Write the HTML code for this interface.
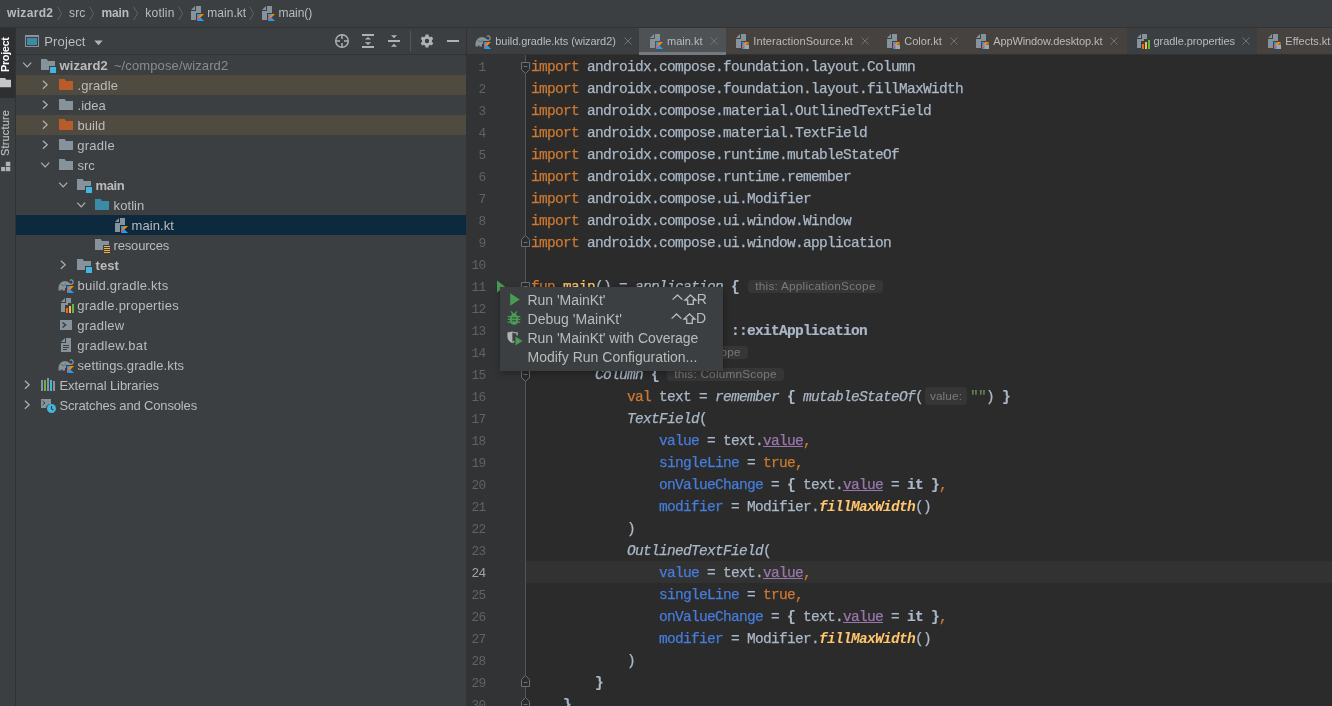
<!DOCTYPE html>
<html><head><meta charset="utf-8"><title>main.kt</title>
<style>
*{box-sizing:border-box;margin:0;padding:0}
html,body{width:1332px;height:706px;overflow:hidden;background:#3c3f41}
body{font-family:"Liberation Sans",sans-serif;font-size:13px;color:#bbbbbb;position:relative}
.a{position:absolute}
.ln{position:absolute;left:0;width:18.8px;text-align:right;font-family:"Liberation Mono",monospace;font-size:12.8px;letter-spacing:-0.48px;line-height:22px;height:22px;color:#606366}
.cl{position:absolute;left:64px;height:22px;-webkit-text-stroke:0.25px;white-space:pre;font-family:"Liberation Mono",monospace;font-size:14.5px;letter-spacing:-0.7015px;line-height:22px;color:#a9b7c6}
.k{color:#cc7832}.n{color:#467cda}.p{color:#9876aa;text-decoration:underline}.f{color:#ffc66d;font-style:italic;font-weight:bold;-webkit-text-stroke:0}.i{font-style:italic}.b{font-weight:bold}.cl b{-webkit-text-stroke:0.2px}.fn{color:#ffc66d}
.h{display:inline-block;vertical-align:top;margin-top:4px;height:13px;line-height:13px;border-radius:4px;background:#363636;color:#7a7a7a;-webkit-text-stroke:0;letter-spacing:0.16px;font-family:"Liberation Sans",sans-serif;font-size:12px;font-style:normal;font-weight:normal;text-align:center;overflow:hidden}
</style></head><body><div id="root" style="position:absolute;left:0;top:0;width:1332px;height:706px;will-change:transform">

<div class="a" style="left:0;top:0;width:1332px;height:28px;background:#3c3f41;border-bottom:1px solid #323232">
<span style="position:absolute;left:7.00px;top:5.00px;font-size:12px;line-height:16px;white-space:pre;color:#bbbbbb;font-weight:bold;letter-spacing:0.326px;">wizard2</span>
<svg class="a" style="left:56.5px;top:5px" width="8" height="17" viewBox="0 0 8 17"><path d="M0.6,1.8 L4.7,8.5 L0.6,15.2" stroke="#606365" stroke-width="1" fill="none"/></svg>
<span style="position:absolute;left:69.00px;top:5.00px;font-size:12px;line-height:16px;white-space:pre;color:#bbbbbb;letter-spacing:0.167px;">src</span>
<svg class="a" style="left:88.5px;top:5px" width="8" height="17" viewBox="0 0 8 17"><path d="M0.6,1.8 L4.7,8.5 L0.6,15.2" stroke="#606365" stroke-width="1" fill="none"/></svg>
<span style="position:absolute;left:101.40px;top:5.00px;font-size:12px;line-height:16px;white-space:pre;color:#bbbbbb;font-weight:bold;letter-spacing:-0.104px;">main</span>
<svg class="a" style="left:132.5px;top:5px" width="8" height="17" viewBox="0 0 8 17"><path d="M0.6,1.8 L4.7,8.5 L0.6,15.2" stroke="#606365" stroke-width="1" fill="none"/></svg>
<span style="position:absolute;left:145.30px;top:5.00px;font-size:12px;line-height:16px;white-space:pre;color:#bbbbbb;letter-spacing:0.214px;">kotlin</span>
<svg class="a" style="left:178px;top:5px" width="8" height="17" viewBox="0 0 8 17"><path d="M0.6,1.8 L4.7,8.5 L0.6,15.2" stroke="#606365" stroke-width="1" fill="none"/></svg>
<svg style="position:absolute;left:188px;top:5px" width="16" height="16" viewBox="0 0 16 16"><path d="M3,5 L7,1 L7,5 Z" fill="#87939a"/><path d="M8,1 L13,1 L13,8 L8,8 L8,15 L3,15 L3,6 L8,6 Z" fill="#87939a"/><defs><linearGradient id="kg1" x1="0" y1="1" x2="1" y2="0"><stop offset="0" stop-color="#c757bc"/><stop offset="0.25" stop-color="#d0609a"/><stop offset="0.55" stop-color="#f88909"/><stop offset="1" stop-color="#f88909"/></linearGradient></defs><path d="M9,9 L12.5,9 L9,12.5 Z" fill="#1aa3f4"/><path d="M12.5,9 L16,9 L9,16 L9,12.5 Z" fill="url(#kg1)"/><path d="M9,16 L12.5,12.5 L16,16 Z" fill="#1aa3f4"/></svg>
<span style="position:absolute;left:207.30px;top:5.00px;font-size:12px;line-height:16px;white-space:pre;color:#bbbbbb;letter-spacing:0.030px;">main.kt</span>
<svg class="a" style="left:249px;top:5px" width="8" height="17" viewBox="0 0 8 17"><path d="M0.6,1.8 L4.7,8.5 L0.6,15.2" stroke="#606365" stroke-width="1" fill="none"/></svg>
<svg style="position:absolute;left:259px;top:5px" width="16" height="16" viewBox="0 0 16 16"><path d="M3,5 L7,1 L7,5 Z" fill="#87939a"/><path d="M8,1 L13,1 L13,8 L8,8 L8,15 L3,15 L3,6 L8,6 Z" fill="#87939a"/><defs><linearGradient id="kg2" x1="0" y1="1" x2="1" y2="0"><stop offset="0" stop-color="#c757bc"/><stop offset="0.25" stop-color="#d0609a"/><stop offset="0.55" stop-color="#f88909"/><stop offset="1" stop-color="#f88909"/></linearGradient></defs><path d="M9,9 L12.5,9 L9,12.5 Z" fill="#1aa3f4"/><path d="M12.5,9 L16,9 L9,16 L9,12.5 Z" fill="url(#kg2)"/><path d="M9,16 L12.5,12.5 L16,16 Z" fill="#1aa3f4"/></svg>
<span style="position:absolute;left:278.50px;top:5.00px;font-size:12px;line-height:16px;white-space:pre;color:#bbbbbb;letter-spacing:-0.053px;">main()</span>
</div>
<div class="a" style="left:0;top:28px;width:16px;height:678px;background:#3c3f41;border-right:1px solid #323232">
<div class="a" style="left:0;top:0;width:15px;height:70px;background:#2d2f30"></div>
<div class="a" style="left:-2px;top:44px;width:0;height:0"><span style="position:absolute;white-space:pre;transform-origin:0 0;transform:rotate(-90deg);font-size:11px;font-weight:bold;color:#ffffff;line-height:15px;left:0;top:0;letter-spacing:-0.4px">Project</span></div>
<svg class="a" style="left:0;top:49px" width="15" height="12" viewBox="0 0 15 12"><path d="M-3,10.2 L11,10.2 L11,2.7 L6.3,2.7 L5,1 L-3,1 Z" fill="#c4c6c8"/></svg>
<div class="a" style="left:-2px;top:127.5px;width:0;height:0"><span style="position:absolute;white-space:pre;transform-origin:0 0;transform:rotate(-90deg);font-size:11px;letter-spacing:0.17px;-webkit-text-stroke:0.2px;color:#bbbbbb;line-height:15px;left:0;top:0">Structure</span></div>
<svg class="a" style="left:0;top:133px" width="15" height="12" viewBox="0 0 15 12"><rect x="5.8" y="0.8" width="4.5" height="4.4" fill="#afb1b3"/><rect x="1.1" y="6" width="4" height="4.2" fill="#afb1b3"/><rect x="5.8" y="6" width="4.5" height="4.2" fill="#afb1b3"/></svg>
</div>
<div class="a" style="left:16px;top:28px;width:450px;height:678px;background:#3c3f41;overflow:hidden">
<div class="a" style="left:0;top:0;width:450px;height:27px;border-bottom:1px solid #323232"></div>
<svg style="position:absolute;left:8px;top:5px" width="16" height="16" viewBox="0 0 16 16"><rect x="1.5" y="2.5" width="13" height="11" fill="none" stroke="#87939a" stroke-width="1"/><rect x="1" y="2" width="14" height="2" fill="#87939a"/><rect x="3" y="5" width="10" height="7" fill="#3b8aa6"/></svg>
<span style="position:absolute;left:28.30px;top:6.00px;font-size:13px;line-height:16px;white-space:pre;color:#bbbbbb;letter-spacing:0.119px;">Project</span>
<svg class="a" style="left:77.5px;top:11.5px" width="9" height="6" viewBox="0 0 9 6"><path d="M0.3,0.5 L8.7,0.5 L4.5,5.3 Z" fill="#afb1b3"/></svg>
<svg style="position:absolute;left:318px;top:5px" width="16" height="16" viewBox="0 0 16 16"><circle cx="8" cy="8" r="6.3" fill="none" stroke="#afb1b3" stroke-width="1.4"/><path d="M8,1.5V6 M8,10V14.5 M1.5,8H6 M10,8H14.5" stroke="#afb1b3" stroke-width="1.5"/></svg>
<svg style="position:absolute;left:344px;top:5px" width="16" height="16" viewBox="0 0 16 16"><rect x="2" y="1" width="12" height="2" fill="#afb1b3"/><rect x="2" y="13" width="12" height="2" fill="#afb1b3"/><path d="M8,3.9 L11.2,6.5 L4.8,6.5 Z M8,12 L11.2,9.3 L4.8,9.3 Z" fill="#afb1b3"/></svg>
<svg style="position:absolute;left:370px;top:5px" width="16" height="16" viewBox="0 0 16 16"><rect x="2" y="7" width="12" height="2" fill="#afb1b3"/><path d="M8,5.2 L11,2.2 L5,2.2 Z M8,10.8 L11,13.8 L5,13.8 Z" fill="#afb1b3"/></svg>
<div class="a" style="left:394px;top:3px;width:1px;height:20px;background:#555759"></div>
<svg style="position:absolute;left:403px;top:5px" width="16" height="16" viewBox="0 0 16 16"><path fill-rule="evenodd" d="M6.33,3.29 L6.56,1.56 L9.44,1.56 L9.67,3.29 L11.25,4.20 L12.86,3.53 L14.30,6.03 L12.92,7.09 L12.92,8.91 L14.30,9.97 L12.86,12.47 L11.25,11.80 L9.67,12.71 L9.44,14.44 L6.56,14.44 L6.33,12.71 L4.75,11.80 L3.14,12.47 L1.70,9.97 L3.08,8.91 L3.08,7.09 L1.70,6.03 L3.14,3.53 L4.75,4.20 Z M8,5.8 A2.2,2.2 0 1 0 8,10.2 A2.2,2.2 0 1 0 8,5.8 Z" fill="#afb1b3"/></svg>
<div class="a" style="left:431px;top:12px;width:12px;height:2px;background:#afb1b3"></div>
<div class="a" style="left:0;top:27px;width:450px;height:20px;background:transparent">
<svg style="position:absolute;left:6px;top:2px" width="16" height="16" viewBox="0 0 16 16"><path d="M1.2,5.6 L5.2,9.9 L9.2,5.6" stroke="#afb1b3" stroke-width="1.2" fill="none"/></svg>
<svg style="position:absolute;left:24px;top:2px" width="16" height="16" viewBox="0 0 16 16"><path d="M1,2 L6.7,2 L7.98,4 L15,4 L15,9 L9,9 L9,13 L1,13 Z" fill="#87939a"/><rect x="10" y="10" width="6" height="6" fill="#40b6e0"/></svg>
<span style="position:absolute;left:43.50px;top:3.00px;font-size:13px;line-height:16px;white-space:pre;color:#bbbbbb;font-weight:bold;letter-spacing:0.102px;">wizard2</span>
<span style="position:absolute;left:97.90px;top:3.00px;font-size:13px;line-height:16px;white-space:pre;color:#8a8c8e;letter-spacing:0.119px;">~/compose/wizard2</span>
</div>
<div class="a" style="left:0;top:47px;width:450px;height:20px;background:#4f4b41">
<svg style="position:absolute;left:24px;top:2px" width="16" height="16" viewBox="0 0 16 16"><path d="M2.9,3.8 L7.2,7.8 L2.9,11.8" stroke="#afb1b3" stroke-width="1.2" fill="none"/></svg>
<svg style="position:absolute;left:42px;top:2px" width="16" height="16" viewBox="0 0 16 16"><path d="M1,13 L15,13 L15,4 L7.98,4 L6.7,2 L1,2 Z" fill="#b85c2a"/></svg>
<span style="position:absolute;left:61.50px;top:3.00px;font-size:13px;line-height:16px;white-space:pre;color:#bbbbbb;letter-spacing:0.107px;">.gradle</span>
</div>
<div class="a" style="left:0;top:67px;width:450px;height:20px;background:transparent">
<svg style="position:absolute;left:24px;top:2px" width="16" height="16" viewBox="0 0 16 16"><path d="M2.9,3.8 L7.2,7.8 L2.9,11.8" stroke="#afb1b3" stroke-width="1.2" fill="none"/></svg>
<svg style="position:absolute;left:42px;top:2px" width="16" height="16" viewBox="0 0 16 16"><path d="M1,13 L15,13 L15,4 L7.98,4 L6.7,2 L1,2 Z" fill="#87939a"/></svg>
<span style="position:absolute;left:61.50px;top:3.00px;font-size:13px;line-height:16px;white-space:pre;color:#bbbbbb;letter-spacing:0.019px;">.idea</span>
</div>
<div class="a" style="left:0;top:87px;width:450px;height:20px;background:#4f4b41">
<svg style="position:absolute;left:24px;top:2px" width="16" height="16" viewBox="0 0 16 16"><path d="M2.9,3.8 L7.2,7.8 L2.9,11.8" stroke="#afb1b3" stroke-width="1.2" fill="none"/></svg>
<svg style="position:absolute;left:42px;top:2px" width="16" height="16" viewBox="0 0 16 16"><path d="M1,13 L15,13 L15,4 L7.98,4 L6.7,2 L1,2 Z" fill="#b85c2a"/></svg>
<span style="position:absolute;left:61.50px;top:3.00px;font-size:13px;line-height:16px;white-space:pre;color:#bbbbbb;letter-spacing:0.066px;">build</span>
</div>
<div class="a" style="left:0;top:107px;width:450px;height:20px;background:transparent">
<svg style="position:absolute;left:24px;top:2px" width="16" height="16" viewBox="0 0 16 16"><path d="M2.9,3.8 L7.2,7.8 L2.9,11.8" stroke="#afb1b3" stroke-width="1.2" fill="none"/></svg>
<svg style="position:absolute;left:42px;top:2px" width="16" height="16" viewBox="0 0 16 16"><path d="M1,13 L15,13 L15,4 L7.98,4 L6.7,2 L1,2 Z" fill="#87939a"/></svg>
<span style="position:absolute;left:61.20px;top:3.00px;font-size:13px;line-height:16px;white-space:pre;color:#bbbbbb;letter-spacing:0.277px;">gradle</span>
</div>
<div class="a" style="left:0;top:127px;width:450px;height:20px;background:transparent">
<svg style="position:absolute;left:24px;top:2px" width="16" height="16" viewBox="0 0 16 16"><path d="M1.2,5.6 L5.2,9.9 L9.2,5.6" stroke="#afb1b3" stroke-width="1.2" fill="none"/></svg>
<svg style="position:absolute;left:42px;top:2px" width="16" height="16" viewBox="0 0 16 16"><path d="M1,13 L15,13 L15,4 L7.98,4 L6.7,2 L1,2 Z" fill="#87939a"/></svg>
<span style="position:absolute;left:61.50px;top:3.00px;font-size:13px;line-height:16px;white-space:pre;color:#bbbbbb;letter-spacing:-0.015px;">src</span>
</div>
<div class="a" style="left:0;top:147px;width:450px;height:20px;background:transparent">
<svg style="position:absolute;left:42px;top:2px" width="16" height="16" viewBox="0 0 16 16"><path d="M1.2,5.6 L5.2,9.9 L9.2,5.6" stroke="#afb1b3" stroke-width="1.2" fill="none"/></svg>
<svg style="position:absolute;left:60px;top:2px" width="16" height="16" viewBox="0 0 16 16"><path d="M1,2 L6.7,2 L7.98,4 L15,4 L15,9 L9,9 L9,13 L1,13 Z" fill="#87939a"/><rect x="10" y="10" width="6" height="6" fill="#40b6e0"/></svg>
<span style="position:absolute;left:79.60px;top:3.00px;font-size:13px;line-height:16px;white-space:pre;color:#bbbbbb;font-weight:bold;letter-spacing:-0.386px;">main</span>
</div>
<div class="a" style="left:0;top:167px;width:450px;height:20px;background:transparent">
<svg style="position:absolute;left:60px;top:2px" width="16" height="16" viewBox="0 0 16 16"><path d="M1.2,5.6 L5.2,9.9 L9.2,5.6" stroke="#afb1b3" stroke-width="1.2" fill="none"/></svg>
<svg style="position:absolute;left:78px;top:2px" width="16" height="16" viewBox="0 0 16 16"><path d="M1,13 L15,13 L15,4 L7.98,4 L6.7,2 L1,2 Z" fill="#3b8aa6"/></svg>
<span style="position:absolute;left:97.60px;top:3.00px;font-size:13px;line-height:16px;white-space:pre;color:#bbbbbb;letter-spacing:0.073px;">kotlin</span>
</div>
<div class="a" style="left:0;top:187px;width:450px;height:20px;background:#0d293e">
<svg style="position:absolute;left:96px;top:2px" width="16" height="16" viewBox="0 0 16 16"><path d="M3,5 L7,1 L7,5 Z" fill="#87939a"/><path d="M8,1 L13,1 L13,8 L8,8 L8,15 L3,15 L3,6 L8,6 Z" fill="#87939a"/><defs><linearGradient id="kg3" x1="0" y1="1" x2="1" y2="0"><stop offset="0" stop-color="#c757bc"/><stop offset="0.25" stop-color="#d0609a"/><stop offset="0.55" stop-color="#f88909"/><stop offset="1" stop-color="#f88909"/></linearGradient></defs><path d="M9,9 L12.5,9 L9,12.5 Z" fill="#1aa3f4"/><path d="M12.5,9 L16,9 L9,16 L9,12.5 Z" fill="url(#kg3)"/><path d="M9,16 L12.5,12.5 L16,16 Z" fill="#1aa3f4"/></svg>
<span style="position:absolute;left:115.60px;top:3.00px;font-size:13px;line-height:16px;white-space:pre;color:#bbbbbb;letter-spacing:0.071px;">main.kt</span>
</div>
<div class="a" style="left:0;top:207px;width:450px;height:20px;background:transparent">
<svg style="position:absolute;left:78px;top:2px" width="16" height="16" viewBox="0 0 16 16"><path d="M1,2 L6.7,2 L7.98,4 L15,4 L15,8 L9,8 L9,13 L1,13 Z" fill="#87939a"/><path d="M10,9.5h6M10,11.5h6M10,13.5h6M10,15.5h6" stroke="#f4af3d" stroke-width="1"/></svg>
<span style="position:absolute;left:97.60px;top:3.00px;font-size:13px;line-height:16px;white-space:pre;color:#bbbbbb;letter-spacing:-0.186px;">resources</span>
</div>
<div class="a" style="left:0;top:227px;width:450px;height:20px;background:transparent">
<svg style="position:absolute;left:42px;top:2px" width="16" height="16" viewBox="0 0 16 16"><path d="M2.9,3.8 L7.2,7.8 L2.9,11.8" stroke="#afb1b3" stroke-width="1.2" fill="none"/></svg>
<svg style="position:absolute;left:60px;top:2px" width="16" height="16" viewBox="0 0 16 16"><path d="M1,2 L6.7,2 L7.98,4 L15,4 L15,9 L9,9 L9,13 L1,13 Z" fill="#87939a"/><rect x="10" y="10" width="6" height="6" fill="#40b6e0"/></svg>
<span style="position:absolute;left:79.60px;top:3.00px;font-size:13px;line-height:16px;white-space:pre;color:#bbbbbb;font-weight:bold;letter-spacing:0.044px;">test</span>
</div>
<div class="a" style="left:0;top:247px;width:450px;height:20px;background:transparent">
<svg style="position:absolute;left:42px;top:2px" width="16" height="16" viewBox="0 0 16 16"><path d="M0.6,13.4 C0.1,10.4 0.9,7.4 3,5.6 C4.6,4.3 7.2,4 9.2,4.6 C10.6,5 11.6,5.9 12.4,6.6 C13.2,7 14.1,6.7 14.4,5.8 C14.7,4.8 14.1,3.7 13.2,3.6 C12.7,3.5 12.4,3.7 12.1,4 L11.4,3.2 C12.2,2.3 13.5,2.1 14.5,2.7 C15.8,3.5 16.1,5.4 15.3,6.7 C14.6,7.9 13.3,8.3 12,8 L8,8 L8,11 L7,11 L7,13.4 L4.5,13.4 C4.5,12.7 4.3,12.3 3.8,12.3 C3.3,12.3 3.1,12.7 3.1,13.4 Z" fill="#87939a"/><path d="M2.6,6.6 C3.2,7.9 4.6,8.8 6,8.5 C6.9,8.3 7.5,7.6 7.7,6.8" stroke="#3c3f41" stroke-width="0.6" fill="none" opacity="0.75"/><defs><linearGradient id="kg4" x1="0" y1="1" x2="1" y2="0"><stop offset="0" stop-color="#c757bc"/><stop offset="0.25" stop-color="#d0609a"/><stop offset="0.55" stop-color="#f88909"/><stop offset="1" stop-color="#f88909"/></linearGradient></defs><path d="M9,9 L12.5,9 L9,12.5 Z" fill="#1aa3f4"/><path d="M12.5,9 L16,9 L9,16 L9,12.5 Z" fill="url(#kg4)"/><path d="M9,16 L12.5,12.5 L16,16 Z" fill="#1aa3f4"/></svg>
<span style="position:absolute;left:61.50px;top:3.00px;font-size:13px;line-height:16px;white-space:pre;color:#bbbbbb;letter-spacing:0.215px;">build.gradle.kts</span>
</div>
<div class="a" style="left:0;top:267px;width:450px;height:20px;background:transparent">
<svg style="position:absolute;left:42px;top:2px" width="16" height="16" viewBox="0 0 16 16"><path d="M3,5 L7,1 L7,5 Z" fill="#87939a"/><path d="M8,1 L13,1 L13,6 L10,6 L10,8 L7,8 L7,15 L3,15 L3,6 L8,6 Z" fill="#87939a"/><rect x="8" y="11" width="2" height="5" fill="#f26522"/><rect x="11" y="9" width="2" height="7" fill="#fdb53f"/><rect x="14" y="7" width="2" height="9" fill="#62b543"/></svg>
<span style="position:absolute;left:61.20px;top:3.00px;font-size:13px;line-height:16px;white-space:pre;color:#bbbbbb;letter-spacing:0.243px;">gradle.properties</span>
</div>
<div class="a" style="left:0;top:287px;width:450px;height:20px;background:transparent">
<svg style="position:absolute;left:42px;top:2px" width="16" height="16" viewBox="0 0 16 16"><rect x="2" y="3" width="12" height="10" fill="#87939a"/><path d="M4.5,5.5 L7.5,8 L4.5,10.5" stroke="#3c3f41" stroke-width="1.6" fill="none"/></svg>
<span style="position:absolute;left:61.20px;top:3.00px;font-size:13px;line-height:16px;white-space:pre;color:#bbbbbb;letter-spacing:0.238px;">gradlew</span>
</div>
<div class="a" style="left:0;top:307px;width:450px;height:20px;background:transparent">
<svg style="position:absolute;left:42px;top:2px" width="16" height="16" viewBox="0 0 16 16"><path d="M3,5 L7,1 L7,5 Z" fill="#87939a"/><path d="M8,1 L13,1 L13,15 L3,15 L3,6 L8,6 Z" fill="#87939a"/><path d="M5,8.5h6M5,10.5h6M5,12.5h4" stroke="#3c3f41" stroke-width="1"/></svg>
<span style="position:absolute;left:61.20px;top:3.00px;font-size:13px;line-height:16px;white-space:pre;color:#bbbbbb;letter-spacing:0.336px;">gradlew.bat</span>
</div>
<div class="a" style="left:0;top:327px;width:450px;height:20px;background:transparent">
<svg style="position:absolute;left:42px;top:2px" width="16" height="16" viewBox="0 0 16 16"><path d="M0.6,13.4 C0.1,10.4 0.9,7.4 3,5.6 C4.6,4.3 7.2,4 9.2,4.6 C10.6,5 11.6,5.9 12.4,6.6 C13.2,7 14.1,6.7 14.4,5.8 C14.7,4.8 14.1,3.7 13.2,3.6 C12.7,3.5 12.4,3.7 12.1,4 L11.4,3.2 C12.2,2.3 13.5,2.1 14.5,2.7 C15.8,3.5 16.1,5.4 15.3,6.7 C14.6,7.9 13.3,8.3 12,8 L8,8 L8,11 L7,11 L7,13.4 L4.5,13.4 C4.5,12.7 4.3,12.3 3.8,12.3 C3.3,12.3 3.1,12.7 3.1,13.4 Z" fill="#87939a"/><path d="M2.6,6.6 C3.2,7.9 4.6,8.8 6,8.5 C6.9,8.3 7.5,7.6 7.7,6.8" stroke="#3c3f41" stroke-width="0.6" fill="none" opacity="0.75"/><defs><linearGradient id="kg5" x1="0" y1="1" x2="1" y2="0"><stop offset="0" stop-color="#c757bc"/><stop offset="0.25" stop-color="#d0609a"/><stop offset="0.55" stop-color="#f88909"/><stop offset="1" stop-color="#f88909"/></linearGradient></defs><path d="M9,9 L12.5,9 L9,12.5 Z" fill="#1aa3f4"/><path d="M12.5,9 L16,9 L9,16 L9,12.5 Z" fill="url(#kg5)"/><path d="M9,16 L12.5,12.5 L16,16 Z" fill="#1aa3f4"/></svg>
<span style="position:absolute;left:61.50px;top:3.00px;font-size:13px;line-height:16px;white-space:pre;color:#bbbbbb;letter-spacing:0.101px;">settings.gradle.kts</span>
</div>
<div class="a" style="left:0;top:347px;width:450px;height:20px;background:transparent">
<svg style="position:absolute;left:6px;top:2px" width="16" height="16" viewBox="0 0 16 16"><path d="M2.9,3.8 L7.2,7.8 L2.9,11.8" stroke="#afb1b3" stroke-width="1.2" fill="none"/></svg>
<svg style="position:absolute;left:24px;top:2px" width="16" height="16" viewBox="0 0 16 16"><rect x="1" y="3" width="2" height="11" fill="#87939a"/><rect x="4" y="3" width="2" height="11" fill="#62b543"/><rect x="7" y="1" width="2" height="13" fill="#87939a"/><rect x="10" y="3" width="2" height="11" fill="#40b6e0"/><rect x="13" y="4" width="2" height="10" fill="#87939a"/></svg>
<span style="position:absolute;left:43.50px;top:3.00px;font-size:13px;line-height:16px;white-space:pre;color:#bbbbbb;letter-spacing:-0.092px;">External Libraries</span>
</div>
<div class="a" style="left:0;top:367px;width:450px;height:20px;background:transparent">
<svg style="position:absolute;left:6px;top:2px" width="16" height="16" viewBox="0 0 16 16"><path d="M2.9,3.8 L7.2,7.8 L2.9,11.8" stroke="#afb1b3" stroke-width="1.2" fill="none"/></svg>
<svg style="position:absolute;left:24px;top:2px" width="16" height="16" viewBox="0 0 16 16"><path d="M1,2 L11,2 L11,7 A5,5 0 0 0 6,11 L1,11 Z" fill="#87939a"/><path d="M2.5,4 L5,6 L2.5,8" stroke="#3c3f41" stroke-width="1" fill="none"/><circle cx="11.5" cy="11.5" r="4.5" fill="#40b6e0"/><path d="M11.5,9 V11.8 L13.3,13" stroke="#3c3f41" stroke-width="1.1" fill="none"/></svg>
<span style="position:absolute;left:43.50px;top:3.00px;font-size:13px;line-height:16px;white-space:pre;color:#bbbbbb;letter-spacing:-0.156px;">Scratches and Consoles</span>
</div>
</div>
<div class="a" style="left:466px;top:28px;width:1px;height:678px;background:#313335"></div>
<div class="a" style="left:467px;top:28px;width:865px;height:678px;background:#2b2b2b;overflow:hidden">
<div class="a" style="left:0;top:0;width:865px;height:27px;background:#3c3f41;border-bottom:1px solid #323232"></div>
<div class="a" style="left:0px;top:0;width:172px;height:26px;background:#3c3f41">
<svg style="position:absolute;left:8px;top:5px" width="16" height="16" viewBox="0 0 16 16"><path d="M0.6,13.4 C0.1,10.4 0.9,7.4 3,5.6 C4.6,4.3 7.2,4 9.2,4.6 C10.6,5 11.6,5.9 12.4,6.6 C13.2,7 14.1,6.7 14.4,5.8 C14.7,4.8 14.1,3.7 13.2,3.6 C12.7,3.5 12.4,3.7 12.1,4 L11.4,3.2 C12.2,2.3 13.5,2.1 14.5,2.7 C15.8,3.5 16.1,5.4 15.3,6.7 C14.6,7.9 13.3,8.3 12,8 L8,8 L8,11 L7,11 L7,13.4 L4.5,13.4 C4.5,12.7 4.3,12.3 3.8,12.3 C3.3,12.3 3.1,12.7 3.1,13.4 Z" fill="#87939a"/><path d="M2.6,6.6 C3.2,7.9 4.6,8.8 6,8.5 C6.9,8.3 7.5,7.6 7.7,6.8" stroke="#3c3f41" stroke-width="0.6" fill="none" opacity="0.75"/><defs><linearGradient id="kg6" x1="0" y1="1" x2="1" y2="0"><stop offset="0" stop-color="#c757bc"/><stop offset="0.25" stop-color="#d0609a"/><stop offset="0.55" stop-color="#f88909"/><stop offset="1" stop-color="#f88909"/></linearGradient></defs><path d="M9,9 L12.5,9 L9,12.5 Z" fill="#1aa3f4"/><path d="M12.5,9 L16,9 L9,16 L9,12.5 Z" fill="url(#kg6)"/><path d="M9,16 L12.5,12.5 L16,16 Z" fill="#1aa3f4"/></svg>
<span style="position:absolute;left:28.30px;top:5.40px;font-size:11px;line-height:16px;white-space:pre;color:#bbbbbb;letter-spacing:-0.069px;">build.gradle.kts (wizard2)</span>
<svg class="a" style="left:157px;top:9px" width="8" height="8" viewBox="0 0 8 8"><path d="M0.5,0.5 L7.5,7.5 M7.5,0.5 L0.5,7.5" stroke="#6f7376" stroke-width="1"/></svg>
</div>
<div class="a" style="left:172px;top:0;width:87px;height:26px;background:#4e5254">
<svg style="position:absolute;left:8px;top:5px" width="16" height="16" viewBox="0 0 16 16"><path d="M3,5 L7,1 L7,5 Z" fill="#87939a"/><path d="M8,1 L13,1 L13,8 L8,8 L8,15 L3,15 L3,6 L8,6 Z" fill="#87939a"/><defs><linearGradient id="kg7" x1="0" y1="1" x2="1" y2="0"><stop offset="0" stop-color="#c757bc"/><stop offset="0.25" stop-color="#d0609a"/><stop offset="0.55" stop-color="#f88909"/><stop offset="1" stop-color="#f88909"/></linearGradient></defs><path d="M9,9 L12.5,9 L9,12.5 Z" fill="#1aa3f4"/><path d="M12.5,9 L16,9 L9,16 L9,12.5 Z" fill="url(#kg7)"/><path d="M9,16 L12.5,12.5 L16,16 Z" fill="#1aa3f4"/></svg>
<span style="position:absolute;left:28.00px;top:5.40px;font-size:11px;line-height:16px;white-space:pre;color:#bbbbbb;letter-spacing:0.004px;">main.kt</span>
<svg class="a" style="left:71px;top:9px" width="8" height="8" viewBox="0 0 8 8"><path d="M0.5,0.5 L7.5,7.5 M7.5,0.5 L0.5,7.5" stroke="#6f7376" stroke-width="1"/></svg>
<div class="a" style="left:0;top:24px;width:87px;height:3px;background:#747a80"></div>
</div>
<div class="a" style="left:259px;top:0;width:151px;height:26px;background:#45423f">
<svg style="position:absolute;left:7px;top:5px" width="16" height="16" viewBox="0 0 16 16"><path d="M3,5 L7,1 L7,5 Z" fill="#87939a"/><path d="M8,1 L13,1 L13,8 L8,8 L8,15 L3,15 L3,6 L8,6 Z" fill="#87939a"/><defs><linearGradient id="kg8" x1="0" y1="1" x2="1" y2="0"><stop offset="0" stop-color="#c757bc"/><stop offset="0.25" stop-color="#d0609a"/><stop offset="0.55" stop-color="#f88909"/><stop offset="1" stop-color="#f88909"/></linearGradient></defs><path d="M9,9 L12.5,9 L9,12.5 Z" fill="#1aa3f4"/><path d="M12.5,9 L16,9 L9,16 L9,12.5 Z" fill="url(#kg8)"/><path d="M9,16 L12.5,12.5 L16,16 Z" fill="#1aa3f4"/><rect x="11.6" y="11.6" width="4.6" height="4.6" fill="#9aa7b0"/><path d="M12.6,11.6 V10.6 A1.3,1.3 0 0 1 15.2,10.6 V11.6" stroke="#f88909" stroke-width="0.9" fill="none"/></svg>
<span style="position:absolute;left:27.30px;top:5.40px;font-size:11px;line-height:16px;white-space:pre;color:#bbbbbb;letter-spacing:0.088px;">InteractionSource.kt</span>
<svg class="a" style="left:135px;top:9px" width="8" height="8" viewBox="0 0 8 8"><path d="M0.5,0.5 L7.5,7.5 M7.5,0.5 L0.5,7.5" stroke="#6f7376" stroke-width="1"/></svg>
</div>
<div class="a" style="left:410px;top:0;width:89px;height:26px;background:#45423f">
<svg style="position:absolute;left:7px;top:5px" width="16" height="16" viewBox="0 0 16 16"><path d="M3,5 L7,1 L7,5 Z" fill="#87939a"/><path d="M8,1 L13,1 L13,8 L8,8 L8,15 L3,15 L3,6 L8,6 Z" fill="#87939a"/><defs><linearGradient id="kg9" x1="0" y1="1" x2="1" y2="0"><stop offset="0" stop-color="#c757bc"/><stop offset="0.25" stop-color="#d0609a"/><stop offset="0.55" stop-color="#f88909"/><stop offset="1" stop-color="#f88909"/></linearGradient></defs><path d="M9,9 L12.5,9 L9,12.5 Z" fill="#1aa3f4"/><path d="M12.5,9 L16,9 L9,16 L9,12.5 Z" fill="url(#kg9)"/><path d="M9,16 L12.5,12.5 L16,16 Z" fill="#1aa3f4"/><rect x="11.6" y="11.6" width="4.6" height="4.6" fill="#9aa7b0"/><path d="M12.6,11.6 V10.6 A1.3,1.3 0 0 1 15.2,10.6 V11.6" stroke="#f88909" stroke-width="0.9" fill="none"/></svg>
<span style="position:absolute;left:27.20px;top:5.40px;font-size:11px;line-height:16px;white-space:pre;color:#bbbbbb;letter-spacing:0.038px;">Color.kt</span>
<svg class="a" style="left:73px;top:9px" width="8" height="8" viewBox="0 0 8 8"><path d="M0.5,0.5 L7.5,7.5 M7.5,0.5 L0.5,7.5" stroke="#6f7376" stroke-width="1"/></svg>
</div>
<div class="a" style="left:499px;top:0;width:161px;height:26px;background:#45423f">
<svg style="position:absolute;left:7px;top:5px" width="16" height="16" viewBox="0 0 16 16"><path d="M3,5 L7,1 L7,5 Z" fill="#87939a"/><path d="M8,1 L13,1 L13,8 L8,8 L8,15 L3,15 L3,6 L8,6 Z" fill="#87939a"/><defs><linearGradient id="kg10" x1="0" y1="1" x2="1" y2="0"><stop offset="0" stop-color="#c757bc"/><stop offset="0.25" stop-color="#d0609a"/><stop offset="0.55" stop-color="#f88909"/><stop offset="1" stop-color="#f88909"/></linearGradient></defs><path d="M9,9 L12.5,9 L9,12.5 Z" fill="#1aa3f4"/><path d="M12.5,9 L16,9 L9,16 L9,12.5 Z" fill="url(#kg10)"/><path d="M9,16 L12.5,12.5 L16,16 Z" fill="#1aa3f4"/><rect x="11.6" y="11.6" width="4.6" height="4.6" fill="#9aa7b0"/><path d="M12.6,11.6 V10.6 A1.3,1.3 0 0 1 15.2,10.6 V11.6" stroke="#f88909" stroke-width="0.9" fill="none"/></svg>
<span style="position:absolute;left:27.20px;top:5.40px;font-size:11px;line-height:16px;white-space:pre;color:#bbbbbb;letter-spacing:-0.105px;">AppWindow.desktop.kt</span>
<svg class="a" style="left:144px;top:9px" width="8" height="8" viewBox="0 0 8 8"><path d="M0.5,0.5 L7.5,7.5 M7.5,0.5 L0.5,7.5" stroke="#6f7376" stroke-width="1"/></svg>
</div>
<div class="a" style="left:660px;top:0;width:130px;height:26px;background:#3c3f41">
<svg style="position:absolute;left:6.5px;top:5px" width="16" height="16" viewBox="0 0 16 16"><path d="M3,5 L7,1 L7,5 Z" fill="#87939a"/><path d="M8,1 L13,1 L13,6 L10,6 L10,8 L7,8 L7,15 L3,15 L3,6 L8,6 Z" fill="#87939a"/><rect x="8" y="11" width="2" height="5" fill="#f26522"/><rect x="11" y="9" width="2" height="7" fill="#fdb53f"/><rect x="14" y="7" width="2" height="9" fill="#62b543"/></svg>
<span style="position:absolute;left:26.50px;top:5.40px;font-size:11px;line-height:16px;white-space:pre;color:#bbbbbb;letter-spacing:-0.062px;">gradle.properties</span>
<svg class="a" style="left:115px;top:9px" width="8" height="8" viewBox="0 0 8 8"><path d="M0.5,0.5 L7.5,7.5 M7.5,0.5 L0.5,7.5" stroke="#6f7376" stroke-width="1"/></svg>
</div>
<div class="a" style="left:790px;top:0;width:75px;height:26px;background:#45423f">
<svg style="position:absolute;left:8px;top:5px" width="16" height="16" viewBox="0 0 16 16"><path d="M3,5 L7,1 L7,5 Z" fill="#87939a"/><path d="M8,1 L13,1 L13,8 L8,8 L8,15 L3,15 L3,6 L8,6 Z" fill="#87939a"/><defs><linearGradient id="kg11" x1="0" y1="1" x2="1" y2="0"><stop offset="0" stop-color="#c757bc"/><stop offset="0.25" stop-color="#d0609a"/><stop offset="0.55" stop-color="#f88909"/><stop offset="1" stop-color="#f88909"/></linearGradient></defs><path d="M9,9 L12.5,9 L9,12.5 Z" fill="#1aa3f4"/><path d="M12.5,9 L16,9 L9,16 L9,12.5 Z" fill="url(#kg11)"/><path d="M9,16 L12.5,12.5 L16,16 Z" fill="#1aa3f4"/><rect x="11.6" y="11.6" width="4.6" height="4.6" fill="#9aa7b0"/><path d="M12.6,11.6 V10.6 A1.3,1.3 0 0 1 15.2,10.6 V11.6" stroke="#f88909" stroke-width="0.9" fill="none"/></svg>
<span style="position:absolute;left:28.30px;top:5.40px;font-size:11px;line-height:16px;white-space:pre;color:#bbbbbb;letter-spacing:0.000px;">Effects.kt</span>
</div>
<div class="a" style="left:0;top:27px;width:58px;height:651px;background:#313335"></div>
<div class="a" style="left:58px;top:27px;width:1px;height:651px;background:#555555"></div>
<div class="a" style="left:59px;top:533px;width:806px;height:22px;background:#323232"></div>
<div class="ln" style="top:29px;color:#606366">1</div>
<div class="cl" style="top:28px"><span class="k">import</span> androidx.compose.foundation.layout.Column</div>
<div class="ln" style="top:51px;color:#606366">2</div>
<div class="cl" style="top:50px"><span class="k">import</span> androidx.compose.foundation.layout.fillMaxWidth</div>
<div class="ln" style="top:73px;color:#606366">3</div>
<div class="cl" style="top:72px"><span class="k">import</span> androidx.compose.material.OutlinedTextField</div>
<div class="ln" style="top:95px;color:#606366">4</div>
<div class="cl" style="top:94px"><span class="k">import</span> androidx.compose.material.TextField</div>
<div class="ln" style="top:117px;color:#606366">5</div>
<div class="cl" style="top:116px"><span class="k">import</span> androidx.compose.runtime.mutableStateOf</div>
<div class="ln" style="top:139px;color:#606366">6</div>
<div class="cl" style="top:138px"><span class="k">import</span> androidx.compose.runtime.remember</div>
<div class="ln" style="top:161px;color:#606366">7</div>
<div class="cl" style="top:160px"><span class="k">import</span> androidx.compose.ui.Modifier</div>
<div class="ln" style="top:183px;color:#606366">8</div>
<div class="cl" style="top:182px"><span class="k">import</span> androidx.compose.ui.window.Window</div>
<div class="ln" style="top:205px;color:#606366">9</div>
<div class="cl" style="top:204px"><span class="k">import</span> androidx.compose.ui.window.application</div>
<div class="ln" style="top:227px;color:#606366">10</div>
<div class="cl" style="top:226px"></div>
<div class="ln" style="top:249px;color:#606366">11</div>
<div class="cl" style="top:248px"><span class="k">fun</span> <span class="fn">main</span>() = <span class="i">application</span> <b>{</b> <span style="display:inline-block;width:1px"></span><span class="h" style="width:135px;font-size:11.8px;letter-spacing:0.226px;text-align:left;padding-left:7.3px">this: ApplicationScope</span></div>
<div class="ln" style="top:271px;color:#606366">12</div>
<div class="cl" style="top:270px">    <span class="i">Window</span>(</div>
<div class="ln" style="top:293px;color:#606366">13</div>
<div class="cl" style="top:292px">        <span class="n">onCloseRequest</span> = <b>::exitApplication</b></div>
<div class="ln" style="top:315px;color:#606366">14</div>
<div class="cl" style="top:314px">    ) <b>{</b> <span style="display:inline-block;width:1px"></span><span class="h" style="width:152px;font-size:11.8px;letter-spacing:0.136px;text-align:left;padding-left:7.3px">this: FrameWindowScope</span></div>
<div class="ln" style="top:337px;color:#606366">15</div>
<div class="cl" style="top:336px">        <span class="i">Column</span> <b>{</b> <span class="h" style="width:117px;font-size:11.8px;letter-spacing:0.199px;text-align:left;padding-left:7.3px">this: ColumnScope</span></div>
<div class="ln" style="top:359px;color:#606366">16</div>
<div class="cl" style="top:358px">            <span class="k">val</span> text = <span class="i">remember</span> <b>{</b> <span class="i">mutableStateOf</span>(<span class="h" style="width:42px;font-size:11.8px;letter-spacing:0.119px;text-align:left;padding-left:4.9px;margin-top:1px;height:18px;line-height:18px;margin-left:2px;border-radius:4px">value:</span><span style="display:inline-block;width:3px"></span><span style="color:#6a8759">""</span>) <b>}</b></div>
<div class="ln" style="top:381px;color:#606366">17</div>
<div class="cl" style="top:380px">            <span class="i">TextField</span>(</div>
<div class="ln" style="top:403px;color:#606366">18</div>
<div class="cl" style="top:402px">                <span class="n">value</span> = text.<span class="p">value</span><span class="k">,</span></div>
<div class="ln" style="top:425px;color:#606366">19</div>
<div class="cl" style="top:424px">                <span class="n">singleLine</span> = <span class="k">true,</span></div>
<div class="ln" style="top:447px;color:#606366">20</div>
<div class="cl" style="top:446px">                <span class="n">onValueChange</span> = <b>{</b> text.<span class="p">value</span> = <b>it</b> <b>}</b><span class="k">,</span></div>
<div class="ln" style="top:469px;color:#606366">21</div>
<div class="cl" style="top:468px">                <span class="n">modifier</span> = Modifier.<span class="f">fillMaxWidth</span>()</div>
<div class="ln" style="top:491px;color:#606366">22</div>
<div class="cl" style="top:490px">            )</div>
<div class="ln" style="top:513px;color:#606366">23</div>
<div class="cl" style="top:512px">            <span class="i">OutlinedTextField</span>(</div>
<div class="ln" style="top:535px;color:#a4a3a3">24</div>
<div class="cl" style="top:534px">                <span class="n">value</span> = text.<span class="p">value</span><span class="k">,</span></div>
<div class="ln" style="top:557px;color:#606366">25</div>
<div class="cl" style="top:556px">                <span class="n">singleLine</span> = <span class="k">true,</span></div>
<div class="ln" style="top:579px;color:#606366">26</div>
<div class="cl" style="top:578px">                <span class="n">onValueChange</span> = <b>{</b> text.<span class="p">value</span> = <b>it</b> <b>}</b><span class="k">,</span></div>
<div class="ln" style="top:601px;color:#606366">27</div>
<div class="cl" style="top:600px">                <span class="n">modifier</span> = Modifier.<span class="f">fillMaxWidth</span>()</div>
<div class="ln" style="top:623px;color:#606366">28</div>
<div class="cl" style="top:622px">            )</div>
<div class="ln" style="top:645px;color:#606366">29</div>
<div class="cl" style="top:644px">        <b>}</b></div>
<div class="ln" style="top:667px;color:#606366">30</div>
<div class="cl" style="top:666px">    <b>}</b></div>
<svg class="a" style="left:54px;top:34px" width="9" height="12" viewBox="0 0 9 12"><path d="M0.5,0.5 H8.5 V7.5 L4.5,11.5 L0.5,7.5 Z" fill="#2b2b2b" stroke="#6c6f71" stroke-width="1"/><path d="M2.5,4.5 H6.5" stroke="#6c6f71" stroke-width="1"/></svg>
<svg class="a" style="left:54px;top:207px" width="9" height="12" viewBox="0 0 9 12"><path d="M0.5,11.5 H8.5 V4.5 L4.5,0.5 L0.5,4.5 Z" fill="#2b2b2b" stroke="#6c6f71" stroke-width="1"/><path d="M2.5,7.5 H6.5" stroke="#6c6f71" stroke-width="1"/></svg>
<svg class="a" style="left:54px;top:254px" width="9" height="12" viewBox="0 0 9 12"><path d="M0.5,0.5 H8.5 V7.5 L4.5,11.5 L0.5,7.5 Z" fill="#2b2b2b" stroke="#6c6f71" stroke-width="1"/><path d="M2.5,4.5 H6.5" stroke="#6c6f71" stroke-width="1"/></svg>
<svg class="a" style="left:54px;top:320px" width="9" height="12" viewBox="0 0 9 12"><path d="M0.5,0.5 H8.5 V7.5 L4.5,11.5 L0.5,7.5 Z" fill="#2b2b2b" stroke="#6c6f71" stroke-width="1"/><path d="M2.5,4.5 H6.5" stroke="#6c6f71" stroke-width="1"/></svg>
<svg class="a" style="left:54px;top:342px" width="9" height="12" viewBox="0 0 9 12"><path d="M0.5,0.5 H8.5 V7.5 L4.5,11.5 L0.5,7.5 Z" fill="#2b2b2b" stroke="#6c6f71" stroke-width="1"/><path d="M2.5,4.5 H6.5" stroke="#6c6f71" stroke-width="1"/></svg>
<svg class="a" style="left:54px;top:647px" width="9" height="12" viewBox="0 0 9 12"><path d="M0.5,11.5 H8.5 V4.5 L4.5,0.5 L0.5,4.5 Z" fill="#2b2b2b" stroke="#6c6f71" stroke-width="1"/><path d="M2.5,7.5 H6.5" stroke="#6c6f71" stroke-width="1"/></svg>
<svg class="a" style="left:54px;top:669px" width="9" height="12" viewBox="0 0 9 12"><path d="M0.5,11.5 H8.5 V4.5 L4.5,0.5 L0.5,4.5 Z" fill="#2b2b2b" stroke="#6c6f71" stroke-width="1"/><path d="M2.5,7.5 H6.5" stroke="#6c6f71" stroke-width="1"/></svg>
<svg class="a" style="left:29px;top:251.5px" width="10" height="13" viewBox="0 0 10 13"><path d="M1,0.5 L9,6.5 L1,12.5 Z" fill="#499c54"/></svg>
<div class="a" style="left:33px;top:259px;width:223px;height:84px;background:#3c3f41;box-shadow:0 2px 7px rgba(0,0,0,0.32)">
<svg class="a" style="left:10px;top:5.6px" width="10" height="13" viewBox="0 0 10 13"><path d="M0.2,0.3 L9.8,6.5 L0.2,12.7 Z" fill="#499c54"/></svg>
<span style="position:absolute;left:27.50px;top:4.60px;font-size:14px;line-height:16px;white-space:pre;color:#bbbbbb;letter-spacing:-0.042px;">Run 'MainKt'</span>
<span style="position:absolute;left:27.50px;top:23.60px;font-size:14px;line-height:16px;white-space:pre;color:#bbbbbb;letter-spacing:0.031px;">Debug 'MainKt'</span>
<span style="position:absolute;left:27.50px;top:42.60px;font-size:14px;line-height:16px;white-space:pre;color:#bbbbbb;letter-spacing:-0.041px;">Run 'MainKt' with Coverage</span>
<span style="position:absolute;left:27.50px;top:61.60px;font-size:14px;line-height:16px;white-space:pre;color:#bbbbbb;letter-spacing:0.006px;">Modify Run Configuration...</span>
<svg class="a" style="left:7px;top:24px" width="14" height="14" viewBox="0 0 14 14"><path d="M3.9,0.4 L6.3,3 M10,0.4 L7.7,3" stroke="#499c54" stroke-width="1.2" fill="none"/><path d="M4.3,4.9 A2.75,2.7 0 0 1 9.8,4.9 Z" fill="#499c54"/><path d="M3,5.9 Q3,4.6 4.3,4.6 H9.8 Q11.1,4.6 11.1,5.9 V9.8 A4.05,4 0 0 1 3,9.8 Z" fill="#499c54"/><path d="M0.7,5.6 H3.2 M10.9,5.6 H13.3 M0.7,8.4 H3.2 M10.9,8.4 H13.3 M0.7,11.2 H3.4 M10.7,11.2 H13.3" stroke="#499c54" stroke-width="1.3" fill="none"/><path d="M4.9,6.9 H9.2 M4.9,9.8 H9.2" stroke="#3c3f41" stroke-width="1"/></svg>
<svg class="a" style="left:6.5px;top:43.5px" width="16" height="15" viewBox="0 0 16 15"><path d="M0.4,1.2 C2,1.3 3.8,1 5.4,0.3 L5.4,12.2 C2.5,11 0.4,8.6 0.4,5.6 Z" fill="#afb1b3"/><path d="M5.4,1 C6.9,1.6 8.6,1.9 10.1,1.9 L10.1,4.4" stroke="#afb1b3" stroke-width="1.3" fill="none"/><path d="M5.4,11.5 C6.2,11.1 6.8,10.7 7.3,10.2" stroke="#afb1b3" stroke-width="1.3" fill="none"/><path d="M8.5,5.4 L15.5,9.9 L8.5,14.4 Z" fill="#499c54"/></svg>
<svg class="a" style="left:171.6px;top:7px" width="34" height="12" viewBox="0 0 34 12"><path d="M0.6,5.6 L5.5,1 L10.4,5.6" stroke="#bbbbbb" stroke-width="1.3" fill="none"/><path d="M18.5,0.9 L24,6 H21.3 V10.4 H15.7 V6 H13 Z" stroke="#bbbbbb" stroke-width="1.3" fill="none" stroke-linejoin="miter"/></svg><span style="position:absolute;left:196.70px;top:4.30px;font-size:14px;line-height:16px;white-space:pre;color:#bbbbbb;letter-spacing:-1.625px;">R</span>
<svg class="a" style="left:170.8px;top:26px" width="34" height="12" viewBox="0 0 34 12"><path d="M0.6,5.6 L5.5,1 L10.4,5.6" stroke="#bbbbbb" stroke-width="1.3" fill="none"/><path d="M18.5,0.9 L24,6 H21.3 V10.4 H15.7 V6 H13 Z" stroke="#bbbbbb" stroke-width="1.3" fill="none" stroke-linejoin="miter"/></svg><span style="position:absolute;left:195.90px;top:23.30px;font-size:14px;line-height:16px;white-space:pre;color:#bbbbbb;letter-spacing:-1.625px;">D</span>
</div>
</div>
</div></body></html>
